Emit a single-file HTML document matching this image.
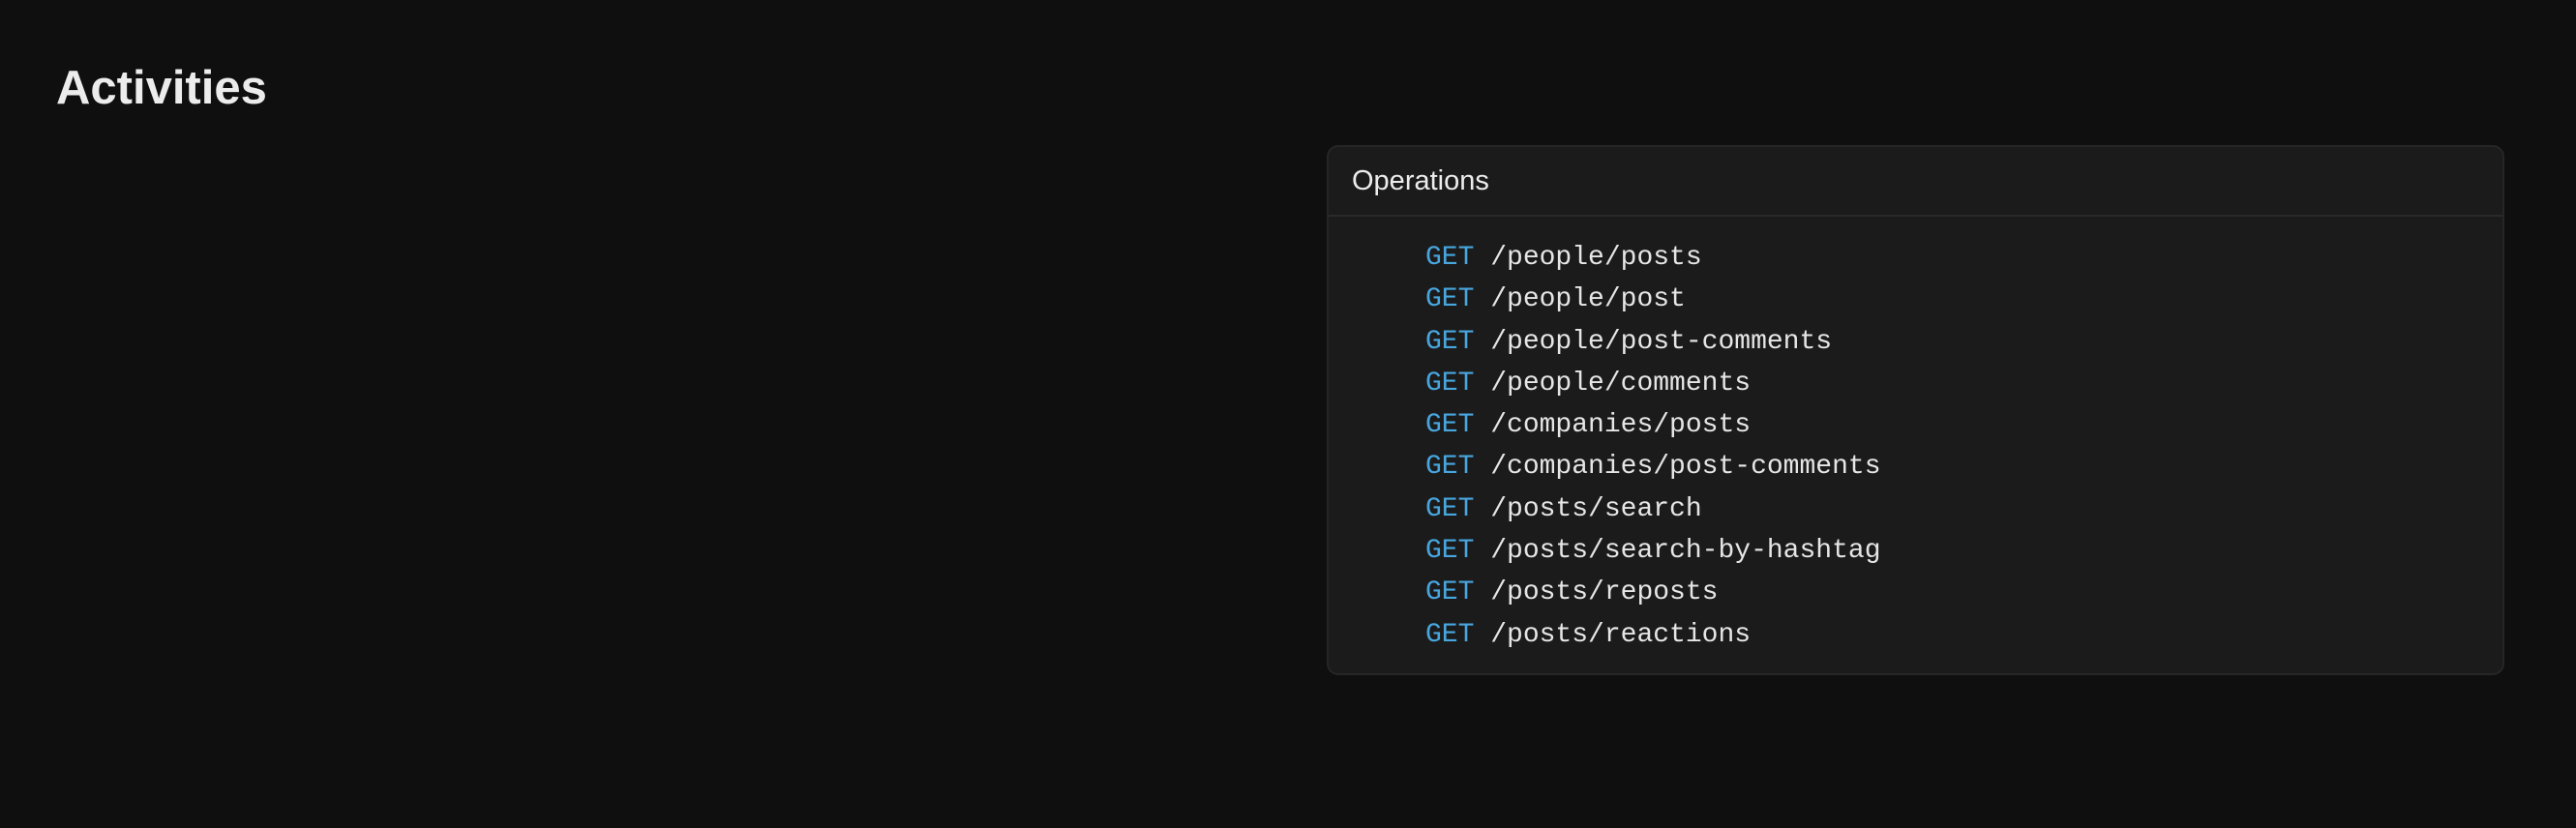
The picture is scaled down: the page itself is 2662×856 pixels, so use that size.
<!DOCTYPE html>
<html><head><meta charset="utf-8"><style>
html,body{margin:0;padding:0;background:#0f0f0f;width:2662px;height:856px;overflow:hidden}
h1{position:absolute;left:58px;top:61px;margin:0;font:bold 49px/60px "Liberation Sans",sans-serif;color:#ececec}
.card{position:absolute;left:1371px;top:150px;width:1217px;height:548px;background:#1b1b1b;border:2px solid #262626;border-radius:12px;box-sizing:border-box}
.hd{height:72px;border-bottom:2px solid #2a2a2a;box-sizing:border-box;padding-left:24px;font:29px/70px "Liberation Sans",sans-serif;color:#ececec}
.ops{position:absolute;left:100px;top:93px;font:28px/43.3px "Liberation Mono",monospace;color:#e6e6e6;white-space:pre}
.g{color:#48a6df}
</style></head><body>
<h1>Activities</h1>
<div class="card"><div class="hd">Operations</div>
<div class="ops"><span class="g">GET</span> /people/posts
<span class="g">GET</span> /people/post
<span class="g">GET</span> /people/post-comments
<span class="g">GET</span> /people/comments
<span class="g">GET</span> /companies/posts
<span class="g">GET</span> /companies/post-comments
<span class="g">GET</span> /posts/search
<span class="g">GET</span> /posts/search-by-hashtag
<span class="g">GET</span> /posts/reposts
<span class="g">GET</span> /posts/reactions</div>
</div>
</body></html>
